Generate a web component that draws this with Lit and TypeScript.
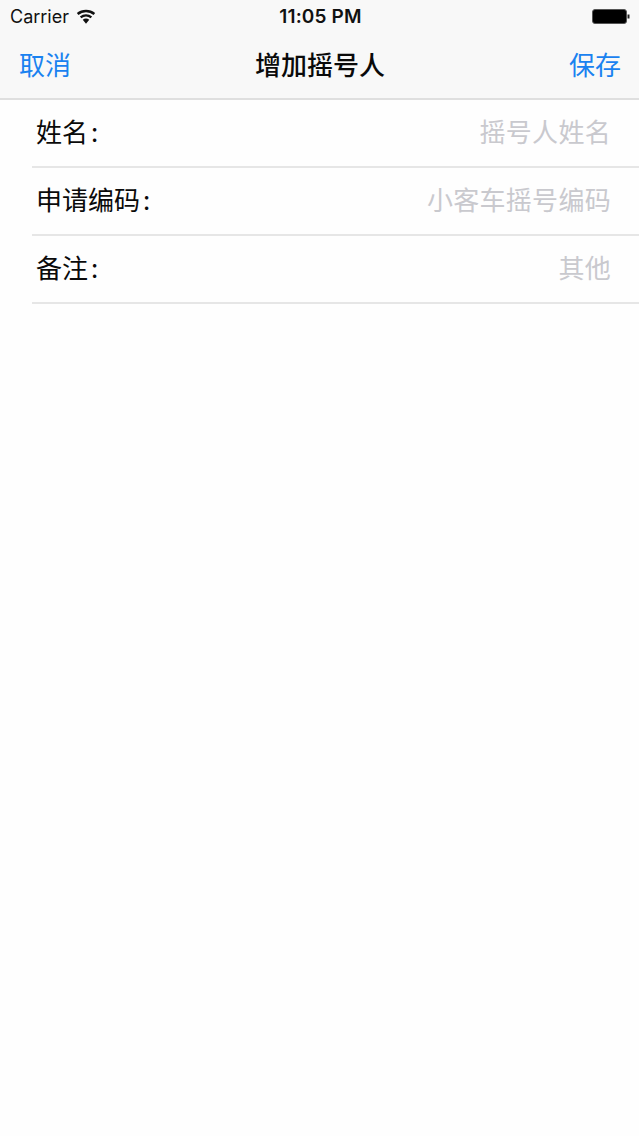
import { LitElement, html, css } from "lit";
import { customElement } from "lit/decorators.js";

@customElement("app-root")
export class AppRoot extends LitElement {
  static styles = css`
    :host { display: block; width: 639px; height: 1136px; background: #fefefe; overflow: hidden; font-family: "Liberation Sans", "Noto Sans CJK SC", sans-serif; }
    .head { background: #f8f8f8; border-bottom: 2px solid #dfdfdf; height: 98px; }
    .status { height: 33px; display: grid; grid-template-columns: 1fr auto 1fr; align-items: center; padding: 0 9px 0 10px; font-family: "Inter", "Liberation Sans", sans-serif; color: #111; }
    .left { display: flex; align-items: center; gap: 8px; font-size: 18px; }
    .wifi { margin-left: -1px; }
    .time { font-size: 19px; font-weight: 600; letter-spacing: 0.15px; margin-left: 1px; }
    .right { display: flex; justify-content: flex-end; }
    .nav { height: 61px; padding: 0 18px 4px 19px; display: grid; grid-template-columns: 1fr auto 1fr; align-items: center; font-family: "Noto Sans CJK SC", sans-serif; }
    .btn { font-size: 26px; color: #1a82f0; line-height: 1; }
    .btn.end { justify-self: end; }
    .title { font-size: 26px; font-weight: 500; color: #0a0a0a; line-height: 1; }
    .rows { padding-left: 32px; }
    .row { height: 62px; padding: 0 28px 4px 4px; border-bottom: 2px solid #e6e6e6; display: flex; align-items: center; justify-content: space-between; font-family: "Noto Sans CJK SC", sans-serif; }
    .label { font-size: 26px; color: #0a0a0a; line-height: 1; }
    .colon { padding-left: 3px; }
    .ph { font-size: 26px; letter-spacing: 0.3px; color: #c9c9ce; line-height: 1; }
  `;
  render() {
    const rows = [["姓名", "摇号人姓名"], ["申请编码", "小客车摇号编码"], ["备注", "其他"]];
    return html`
      <div class="head">
        <div class="status">
          <div class="left">Carrier
            <svg class="wifi" width="20" height="15" viewBox="0 0 19 14"><path d="M9.5 14 L12.6 10.2 A5 5 0 0 0 6.4 10.2 Z M5.1 8.7 A7 7 0 0 1 13.9 8.7 L15.3 7 A9.3 9.3 0 0 0 3.7 7 Z M2.3 5.5 A11.3 11.3 0 0 1 16.7 5.5 L18.2 3.7 A13.6 13.6 0 0 0 .8 3.7 Z" fill="#111"/></svg>
          </div>
          <div class="time">11:05 PM</div>
          <div class="right">
            <svg width="38" height="16" viewBox="0 0 38 16"><rect x="0.5" y="0.5" width="34" height="14" rx="2.5" fill="#000" stroke="#555"/><rect x="35.5" y="5.5" width="2" height="4" fill="#222"/></svg>
          </div>
        </div>
        <div class="nav">
          <span class="btn">取消</span>
          <span class="title">增加摇号人</span>
          <span class="btn end">保存</span>
        </div>
      </div>
      <div class="rows">
        ${rows.map(([l, p]) => html`<div class="row"><span class="label">${l}<span class="colon">:</span></span><span class="ph">${p}</span></div>`)}
      </div>
    `;
  }
}
